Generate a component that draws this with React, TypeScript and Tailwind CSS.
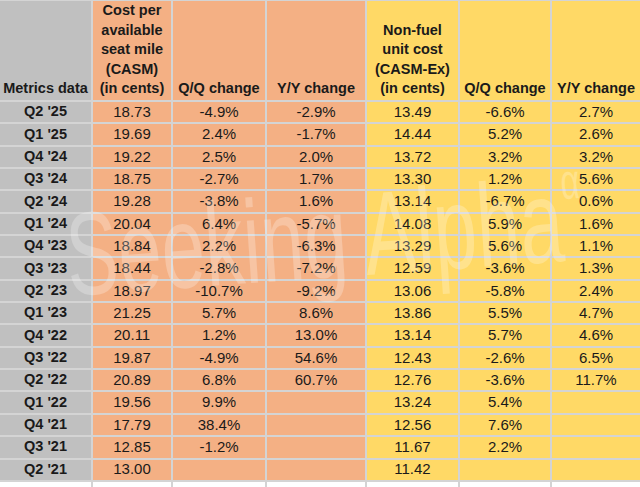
const rows: string[][] = [
  ["Q2 '25", "18.73", "-4.9%", "-2.9%", "13.49", "-6.6%", "2.7%"],
  ["Q1 '25", "19.69", "2.4%", "-1.7%", "14.44", "5.2%", "2.6%"],
  ["Q4 '24", "19.22", "2.5%", "2.0%", "13.72", "3.2%", "3.2%"],
  ["Q3 '24", "18.75", "-2.7%", "1.7%", "13.30", "1.2%", "5.6%"],
  ["Q2 '24", "19.28", "-3.8%", "1.6%", "13.14", "-6.7%", "0.6%"],
  ["Q1 '24", "20.04", "6.4%", "-5.7%", "14.08", "5.9%", "1.6%"],
  ["Q4 '23", "18.84", "2.2%", "-6.3%", "13.29", "5.6%", "1.1%"],
  ["Q3 '23", "18.44", "-2.8%", "-7.2%", "12.59", "-3.6%", "1.3%"],
  ["Q2 '23", "18.97", "-10.7%", "-9.2%", "13.06", "-5.8%", "2.4%"],
  ["Q1 '23", "21.25", "5.7%", "8.6%", "13.86", "5.5%", "4.7%"],
  ["Q4 '22", "20.11", "1.2%", "13.0%", "13.14", "5.7%", "4.6%"],
  ["Q3 '22", "19.87", "-4.9%", "54.6%", "12.43", "-2.6%", "6.5%"],
  ["Q2 '22", "20.89", "6.8%", "60.7%", "12.76", "-3.6%", "11.7%"],
  ["Q1 '22", "19.56", "9.9%", "", "13.24", "5.4%", ""],
  ["Q4 '21", "17.79", "38.4%", "", "12.56", "7.6%", ""],
  ["Q3 '21", "12.85", "-1.2%", "", "11.67", "2.2%", ""],
  ["Q2 '21", "13.00", "", "", "11.42", "", ""],
];

// background per column: label, CASM block (orange), CASM-Ex block (yellow)
const colBg = [
  "bg-[#c0c0c0]",
  "bg-[#f4b084]",
  "bg-[#f4b084]",
  "bg-[#f4b084]",
  "bg-[#ffd966]",
  "bg-[#ffd966]",
  "bg-[#ffd966]",
];

const HeaderCell = ({ bg, children }: { bg: string; children: React.ReactNode }) => (
  <div className={`${bg} flex items-end justify-center text-center font-bold text-[14.5px] leading-[19.6px] pb-[1px]`}>
    <div className="whitespace-nowrap">{children}</div>
  </div>
);

export default function App() {
  return (
    <main
      className="relative w-[640px] h-[487px] overflow-hidden bg-white text-[#1a1a1a]"
      style={{ fontFamily: '"Liberation Sans", Arial, sans-serif' }}
    >
      <div className="grid grid-cols-[91px_78px_92px_98px_91px_90px_88px] grid-rows-[99px_repeat(18,20.35px)] gap-[2px] pt-[1px] bg-[#d4d4d4]">
        {/* Header row */}
        <HeaderCell bg={colBg[0]}>Metrics data</HeaderCell>
        <HeaderCell bg={colBg[1]}>
          Cost per
          <br />
          available
          <br />
          seat mile
          <br />
          (CASM)
          <br />
          (in cents)
        </HeaderCell>
        <HeaderCell bg={colBg[2]}>Q/Q change</HeaderCell>
        <HeaderCell bg={colBg[3]}>Y/Y change</HeaderCell>
        <HeaderCell bg={colBg[4]}>
          Non-fuel
          <br />
          unit cost
          <br />
          (CASM-Ex)
          <br />
          (in cents)
        </HeaderCell>
        <HeaderCell bg={colBg[5]}>Q/Q change</HeaderCell>
        <HeaderCell bg={colBg[6]}>Y/Y change</HeaderCell>

        {/* Data rows */}
        {rows.map((row) =>
          row.map((cell, i) => (
            <div
              key={row[0] + i}
              className={`${colBg[i]} flex items-center justify-center whitespace-nowrap ${
                i === 0 ? "font-bold text-[14.5px]" : "text-[15px]"
              }`}
            >
              {cell}
            </div>
          ))
        )}

        {/* Empty spreadsheet row below the data */}
        {colBg.map((_, i) => (
          <div key={"empty" + i} className="bg-white" />
        ))}
      </div>

      {/* Watermark */}
      <div className="pointer-events-none absolute left-[62px] top-[196px] origin-top-left [transform:rotate(-4deg)_scaleX(0.66)] whitespace-nowrap text-[118px] leading-none text-white/25">
        Seeking Alpha
        <span className="relative -top-[62px] text-[50px]">α</span>
      </div>
    </main>
  );
}
